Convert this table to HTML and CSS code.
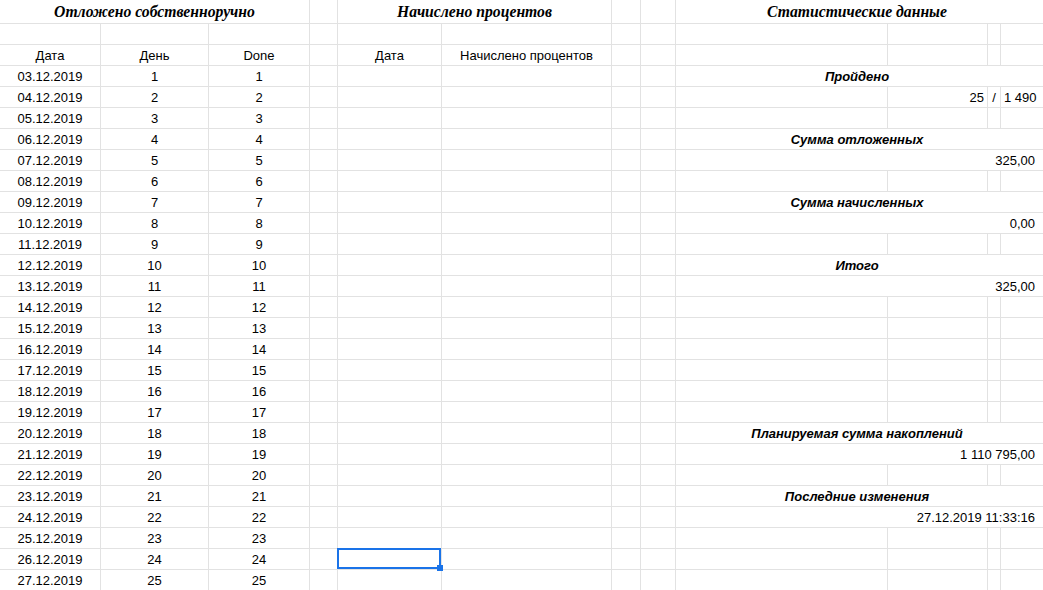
FILE: index.html
```html
<!DOCTYPE html>
<html lang="ru">
<head>
<meta charset="utf-8">
<title>Накопления</title>
<link rel="stylesheet" href="styles.css">
</head>
<body>
<div class="sheet">
  <!-- row 0 -->
  <div class="c hd span3">Отложено собственноручно</div>
  <div class="c"></div>
  <div class="c hd span2">Начислено процентов</div>
  <div class="c"></div>
  <div class="c"></div>
  <div class="c hd span4 stat">Статистические данные</div>

  <!-- row 1 -->
  <div class="c"></div><div class="c"></div><div class="c"></div><div class="c"></div>
  <div class="c"></div><div class="c"></div><div class="c"></div><div class="c"></div>
  <div class="c"></div><div class="c"></div><div class="c"></div><div class="c"></div>

  <!-- row 2 -->
  <div class="c ctr">Дата</div><div class="c ctr">День</div><div class="c ctr">Done</div><div class="c"></div>
  <div class="c ctr">Дата</div><div class="c ctr">Начислено процентов</div><div class="c"></div><div class="c"></div>
  <div class="c"></div><div class="c"></div><div class="c"></div><div class="c"></div>

  <!-- row 3 -->
  <div class="c ctr">03.12.2019</div><div class="c ctr">1</div><div class="c ctr">1</div><div class="c"></div>
  <div class="c"></div><div class="c"></div><div class="c"></div><div class="c"></div>
  <div class="c lbl span4 stat">Пройдено</div>

  <!-- row 4 -->
  <div class="c ctr">04.12.2019</div><div class="c ctr">2</div><div class="c ctr">2</div><div class="c"></div>
  <div class="c"></div><div class="c"></div><div class="c"></div><div class="c"></div>
  <div class="c"></div><div class="c r">25</div><div class="c ctr slash">/</div><div class="c r last">1 490</div>

  <!-- row 5 -->
  <div class="c ctr">05.12.2019</div><div class="c ctr">3</div><div class="c ctr">3</div><div class="c"></div>
  <div class="c"></div><div class="c"></div><div class="c"></div><div class="c"></div>
  <div class="c"></div><div class="c"></div><div class="c"></div><div class="c"></div>

  <!-- row 6 -->
  <div class="c ctr">06.12.2019</div><div class="c ctr">4</div><div class="c ctr">4</div><div class="c"></div>
  <div class="c"></div><div class="c"></div><div class="c"></div><div class="c"></div>
  <div class="c lbl span4 stat">Сумма отложенных</div>

  <!-- row 7 -->
  <div class="c ctr">07.12.2019</div><div class="c ctr">5</div><div class="c ctr">5</div><div class="c"></div>
  <div class="c"></div><div class="c"></div><div class="c"></div><div class="c"></div>
  <div class="c r span4 stat">325,00</div>

  <!-- row 8 -->
  <div class="c ctr">08.12.2019</div><div class="c ctr">6</div><div class="c ctr">6</div><div class="c"></div>
  <div class="c"></div><div class="c"></div><div class="c"></div><div class="c"></div>
  <div class="c"></div><div class="c"></div><div class="c"></div><div class="c"></div>

  <!-- row 9 -->
  <div class="c ctr">09.12.2019</div><div class="c ctr">7</div><div class="c ctr">7</div><div class="c"></div>
  <div class="c"></div><div class="c"></div><div class="c"></div><div class="c"></div>
  <div class="c lbl span4 stat">Сумма начисленных</div>

  <!-- row 10 -->
  <div class="c ctr">10.12.2019</div><div class="c ctr">8</div><div class="c ctr">8</div><div class="c"></div>
  <div class="c"></div><div class="c"></div><div class="c"></div><div class="c"></div>
  <div class="c r span4 stat">0,00</div>

  <!-- row 11 -->
  <div class="c ctr">11.12.2019</div><div class="c ctr">9</div><div class="c ctr">9</div><div class="c"></div>
  <div class="c"></div><div class="c"></div><div class="c"></div><div class="c"></div>
  <div class="c"></div><div class="c"></div><div class="c"></div><div class="c"></div>

  <!-- row 12 -->
  <div class="c ctr">12.12.2019</div><div class="c ctr">10</div><div class="c ctr">10</div><div class="c"></div>
  <div class="c"></div><div class="c"></div><div class="c"></div><div class="c"></div>
  <div class="c lbl span4 stat">Итого</div>

  <!-- row 13 -->
  <div class="c ctr">13.12.2019</div><div class="c ctr">11</div><div class="c ctr">11</div><div class="c"></div>
  <div class="c"></div><div class="c"></div><div class="c"></div><div class="c"></div>
  <div class="c r span4 stat">325,00</div>

  <!-- row 14 -->
  <div class="c ctr">14.12.2019</div><div class="c ctr">12</div><div class="c ctr">12</div><div class="c"></div>
  <div class="c"></div><div class="c"></div><div class="c"></div><div class="c"></div>
  <div class="c"></div><div class="c"></div><div class="c"></div><div class="c"></div>

  <!-- row 15 -->
  <div class="c ctr">15.12.2019</div><div class="c ctr">13</div><div class="c ctr">13</div><div class="c"></div>
  <div class="c"></div><div class="c"></div><div class="c"></div><div class="c"></div>
  <div class="c"></div><div class="c"></div><div class="c"></div><div class="c"></div>

  <!-- row 16 -->
  <div class="c ctr">16.12.2019</div><div class="c ctr">14</div><div class="c ctr">14</div><div class="c"></div>
  <div class="c"></div><div class="c"></div><div class="c"></div><div class="c"></div>
  <div class="c"></div><div class="c"></div><div class="c"></div><div class="c"></div>

  <!-- row 17 -->
  <div class="c ctr">17.12.2019</div><div class="c ctr">15</div><div class="c ctr">15</div><div class="c"></div>
  <div class="c"></div><div class="c"></div><div class="c"></div><div class="c"></div>
  <div class="c"></div><div class="c"></div><div class="c"></div><div class="c"></div>

  <!-- row 18 -->
  <div class="c ctr">18.12.2019</div><div class="c ctr">16</div><div class="c ctr">16</div><div class="c"></div>
  <div class="c"></div><div class="c"></div><div class="c"></div><div class="c"></div>
  <div class="c"></div><div class="c"></div><div class="c"></div><div class="c"></div>

  <!-- row 19 -->
  <div class="c ctr">19.12.2019</div><div class="c ctr">17</div><div class="c ctr">17</div><div class="c"></div>
  <div class="c"></div><div class="c"></div><div class="c"></div><div class="c"></div>
  <div class="c"></div><div class="c"></div><div class="c"></div><div class="c"></div>

  <!-- row 20 -->
  <div class="c ctr">20.12.2019</div><div class="c ctr">18</div><div class="c ctr">18</div><div class="c"></div>
  <div class="c"></div><div class="c"></div><div class="c"></div><div class="c"></div>
  <div class="c lbl span4 stat">Планируемая сумма накоплений</div>

  <!-- row 21 -->
  <div class="c ctr">21.12.2019</div><div class="c ctr">19</div><div class="c ctr">19</div><div class="c"></div>
  <div class="c"></div><div class="c"></div><div class="c"></div><div class="c"></div>
  <div class="c r span4 stat">1 110 795,00</div>

  <!-- row 22 -->
  <div class="c ctr">22.12.2019</div><div class="c ctr">20</div><div class="c ctr">20</div><div class="c"></div>
  <div class="c"></div><div class="c"></div><div class="c"></div><div class="c"></div>
  <div class="c"></div><div class="c"></div><div class="c"></div><div class="c"></div>

  <!-- row 23 -->
  <div class="c ctr">23.12.2019</div><div class="c ctr">21</div><div class="c ctr">21</div><div class="c"></div>
  <div class="c"></div><div class="c"></div><div class="c"></div><div class="c"></div>
  <div class="c lbl span4 stat">Последние изменения</div>

  <!-- row 24 -->
  <div class="c ctr">24.12.2019</div><div class="c ctr">22</div><div class="c ctr">22</div><div class="c"></div>
  <div class="c"></div><div class="c"></div><div class="c"></div><div class="c"></div>
  <div class="c r span4 stat">27.12.2019 11:33:16</div>

  <!-- row 25 -->
  <div class="c ctr">25.12.2019</div><div class="c ctr">23</div><div class="c ctr">23</div><div class="c"></div>
  <div class="c"></div><div class="c"></div><div class="c"></div><div class="c"></div>
  <div class="c"></div><div class="c"></div><div class="c"></div><div class="c"></div>

  <!-- row 26 -->
  <div class="c ctr">26.12.2019</div><div class="c ctr">24</div><div class="c ctr">24</div><div class="c"></div>
  <div class="c sel"><span class="sel-box"></span><span class="sel-handle"></span></div><div class="c"></div><div class="c"></div><div class="c"></div>
  <div class="c"></div><div class="c"></div><div class="c"></div><div class="c"></div>

  <!-- row 27 -->
  <div class="c ctr">27.12.2019</div><div class="c ctr">25</div><div class="c ctr">25</div><div class="c"></div>
  <div class="c"></div><div class="c"></div><div class="c"></div><div class="c"></div>
  <div class="c"></div><div class="c"></div><div class="c"></div><div class="c"></div>
</div>
</body>
</html>
```

FILE: styles.css
```css
html, body {
  margin: 0;
  padding: 0;
  background: #ffffff;
  overflow: hidden;
}

.sheet {
  display: grid;
  grid-template-columns: 101px 108px 101px 28px 104px 170px 29px 35px 212px 100px 13px 43px;
  grid-template-rows: 24px;
  grid-auto-rows: 21px;
  width: 1044px;
  font-family: "Liberation Sans", Arial, sans-serif;
  font-size: 13px;
  color: #000000;
}

.c {
  box-sizing: border-box;
  border-right: 1px solid #e2e2e2;
  border-bottom: 1px solid #e2e2e2;
  padding: 0 3px;
  line-height: 22px;
  white-space: nowrap;
  overflow: hidden;
}

.ctr { text-align: center; }
.r { text-align: right; }

.span2 { grid-column: span 2; }
.span3 { grid-column: span 3; }
.span4 { grid-column: span 4; }

.hd {
  font-family: "Liberation Serif", "Times New Roman", serif;
  font-size: 15.7px;
  font-weight: bold;
  font-style: italic;
  text-align: center;
  line-height: 24px;
}

.lbl {
  font-weight: bold;
  font-style: italic;
  text-align: center;
}

.stat {
  padding: 0 8px 0 3px;
}

.last {
  padding-right: 8px;
}

.slash {
  padding: 0;
}

.sel {
  position: relative;
  overflow: visible;
}

.sel-box {
  position: absolute;
  top: -1px;
  left: -1px;
  right: 0;
  bottom: 0;
  border: 2px solid #1a73e8;
  z-index: 2;
}

.sel-handle {
  position: absolute;
  right: -2px;
  bottom: -2px;
  width: 6px;
  height: 6px;
  background: #1a73e8;
  z-index: 3;
}
```
